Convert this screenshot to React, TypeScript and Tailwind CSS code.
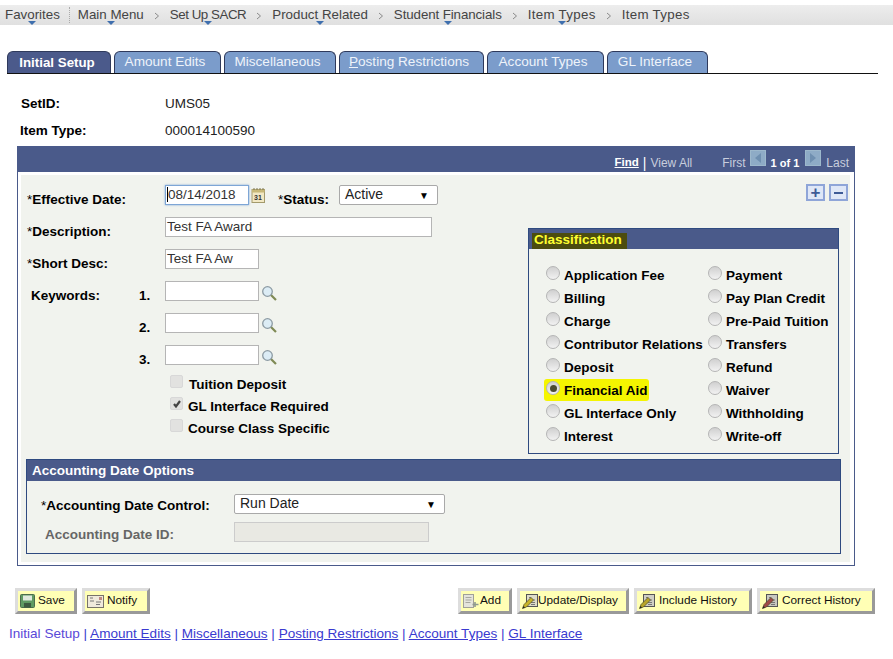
const crumbs = [
  { label: 'Favorites', caret: true, fit: '' },
  { label: 'Main Menu', caret: true, fit: '' },
  { label: 'Set Up SACR', caret: true, fit: 'tracking-[-0.45px]' },
  { label: 'Product Related', caret: true, fit: '' },
  { label: 'Student Financials', caret: true, fit: 'tracking-[-0.1px]' },
  { label: 'Item Types', caret: true, fit: 'tracking-[0.3px]' },
  { label: 'Item Types', caret: false, fit: 'tracking-[0.3px]' }
];

const tabs = [
  { label: 'Amount Edits', width: 'w-[107px]' },
  { label: 'Miscellaneous', width: 'w-[112px]' },
  { label: 'Posting Restrictions', width: 'w-[145px]' },
  { label: 'Account Types', width: 'w-[117px]' },
  { label: 'GL Interface', width: 'w-[101px]' }
];

const leftRadios = [
  'Application Fee',
  'Billing',
  'Charge',
  'Contributor Relations',
  'Deposit',
  'Financial Aid',
  'GL Interface Only',
  'Interest'
];

const rightRadios = [
  'Payment',
  'Pay Plan Credit',
  'Pre-Paid Tuition',
  'Transfers',
  'Refund',
  'Waiver',
  'Withholding',
  'Write-off'
];

const Caret = () => (
  <span className="absolute bottom-0 left-1/2 h-0 w-0 -translate-x-1/2 border-x-[4px] border-t-[4px] border-x-transparent border-t-[#3f6fae]" />
);

const Chevron = () => (
  <svg width="6" height="8" viewBox="0 0 6 8" className="mx-[10px] mt-[2px]">
    <path d="M1 1l3.5 3L1 7" fill="none" stroke="#8a8a8a" strokeWidth="1" />
  </svg>
);

const Lookup = () => (
  <svg width="16" height="16" viewBox="0 0 16 16" className="ml-[2px] mt-[4px] shrink-0">
    <path d="M9.500 9.500L15 15" stroke="#7f8a55" strokeWidth="2.200" />
    <circle cx="6.500" cy="6.500" r="4.800" fill="#dcecf5" stroke="#8c9aa3" strokeWidth="1.300" />
  </svg>
);

const Calendar = () => (
  <svg width="15" height="15" viewBox="0 0 15 15" className="ml-[2px] mt-[3px] shrink-0">
    <rect x="1" y="1.500" width="12.500" height="13" fill="#f2e8c4" stroke="#a39a6c" />
    <path d="M1 1.500h12.500v3H1z" fill="#c8b878" />
    <path d="M3 0v2M6 0v2M9 0v2M12 0v2" stroke="#7d7650" />
    <text x="3" y="12.300" fontSize="7" fontWeight="700" fill="#333" fontFamily="Liberation Sans">31</text>
  </svg>
);

const Radio = ({ on }: { on?: boolean }) => (
  <span className="mt-[-6px] flex h-[14px] w-[14px] shrink-0 items-center justify-center rounded-full border border-[#b5b5b5] bg-gradient-to-b from-[#d0d0d0] to-[#f2f2f2]">
    {on && <span className="h-[7px] w-[7px] rounded-full bg-[#4a4a30]" />}
  </span>
);

const Check = ({ on }: { on?: boolean }) => (
  <span className="flex h-[13px] w-[13px] shrink-0 items-center justify-center rounded-[2px] border border-[#d8d8d8] bg-[#e2e2e0]">
    {on && (
      <svg width="10" height="10" viewBox="0 0 10 10">
        <path d="M2 5l2 2.500L8 2" fill="none" stroke="#444" strokeWidth="2.200" />
      </svg>
    )}
  </span>
);

const Select = ({ label, width }: { label: string; width: string }) => (
  <div className={`flex h-[20px] items-center justify-between rounded-[2px] border border-[#a9a9a9] bg-white pb-[2px] pl-[5px] pr-[8px] text-[14px] text-[#222] ${width}`}>
    <span>{label}</span>
    <span className="mt-[2px] text-[10px] text-black">▼</span>
  </div>
);

const Field = ({ value, width }: { value?: string; width: string }) => (
  <div className={`h-[20px] overflow-hidden border border-[#b5b5b5] bg-white pl-[1px] text-[13.5px] leading-[18px] text-[#333] ${width}`}>
    {value}
  </div>
);

const PageButton = ({ label, icon, width, gap }: { label: string; icon: React.ReactNode; width: string; gap?: string }) => (
  <div className={`flex h-[26px] items-center border-[3px] border-b-[#999] border-l-[#ddd] border-r-[#999] border-t-[#ddd] bg-[#ffffb5] pl-[2px] text-[11.8px] text-[#111] ${width} ${gap ?? 'gap-[3px]'}`}>
    {icon}
    <span>{label}</span>
  </div>
);

const SaveIcon = () => (
  <svg width="15" height="14" viewBox="0 0 15 14">
    <rect x="0.500" y="0.500" width="14" height="13" rx="1" fill="#5f9a62" stroke="#4b6b4b" />
    <rect x="3" y="1.500" width="9" height="5" fill="#dfe8dd" />
    <rect x="4" y="9" width="7" height="4.500" fill="#3d5a40" />
  </svg>
);

const NotifyIcon = () => (
  <svg width="17" height="13" viewBox="0 0 17 13">
    <rect x="0.500" y="0.500" width="16" height="12" fill="#efeadb" stroke="#77736a" />
    <path d="M3 3h3M3 6h4M9 7h5M9 9.500h4" stroke="#777" />
    <rect x="12" y="2" width="3" height="3" fill="#c08a80" />
  </svg>
);

const AddIcon = () => (
  <svg width="16" height="14" viewBox="0 0 16 14">
    <rect x="0.500" y="0.500" width="10" height="13" fill="#e4e4dc" stroke="#a0a098" />
    <path d="M2.500 3.500h6M2.500 6h6M2.500 8.500h5" stroke="#a8a8a0" />
    <path d="M12 8v5M9.500 10.500h6" stroke="#8f9a8f" strokeWidth="1.600" />
  </svg>
);

const EditIcon = ({ tone, page }: { tone: string; page: string }) => (
  <svg width="16" height="15" viewBox="0 0 16 15">
    <rect x="4.500" y="0.500" width="11" height="12" fill={page} stroke="#555" />
    <path d="M7 3.500h2M7 6h6M9 8.500h4M9 10.500h4" stroke="#777" />
    <path d="M0.500 14.500l1.500-4 7-7 2.500 2.500-7 7z" fill={tone} stroke="#4a4a20" strokeWidth="0.700" />
    <path d="M0.500 14.500l1-2.600 1.600 1.600z" fill="#222" />
  </svg>
);

const Row = ({ label, children, className }: { label: React.ReactNode; children: React.ReactNode; className?: string }) => (
  <div className={`flex h-[20px] ${className ?? ''}`}>
    <div className="w-[138px] pt-[6px] leading-[18px]">{label}</div>
    {children}
  </div>
);

const Req = () => <span className="font-normal">*</span>;

export default function App() {
  return (
    <div className="h-[659px] w-[893px] overflow-hidden bg-white pt-[5px] font-['Liberation_Sans',Arial,sans-serif] text-[13.5px] text-black">
      <div className="flex h-[20px] items-center bg-gradient-to-b from-[#ededed] to-[#e0e0e0] pl-[5px] text-[13.33px] leading-[20px] text-[#444]">
        {crumbs.map((c, i) => (
          <div key={i} className="flex items-center">
            <span className={`relative h-[20px] whitespace-nowrap ${c.fit}`}>
              {c.label}
              {c.caret && <Caret />}
            </span>
            {i === 0 && <span className="ml-[9px] mr-[8px] h-[16px] border-l border-dotted border-[#aaa]" />}
            {i > 0 && i < crumbs.length - 1 && <Chevron />}
          </div>
        ))}
      </div>

      <div className="ml-[7px] mt-[26px] flex h-[23px] w-[871px] gap-[3px] border-b border-b-[#111]">
        <div className="flex h-[22px] w-[104px] items-center justify-center rounded-t-[6px] border border-b-0 border-[#2f3a5c] bg-[#4b5a8b] pr-[4px] text-[13.33px] font-bold text-white">
          Initial Setup
        </div>
        {tabs.map((t) => (
          <div
            key={t.label}
            className={`flex h-[22px] items-center justify-center rounded-t-[6px] border border-b-0 border-[#2f3a5c] bg-[#7b9ccb] pr-[5px] text-[13.6px] text-[#eef3fa] ${t.width}`}
          >
            {t.label === 'Posting Restrictions' ? (
              <span>
                <span className="underline">P</span>osting Restrictions
              </span>
            ) : (
              t.label
            )}
          </div>
        ))}
      </div>

      <div className="ml-[20px] mt-[21px] flex h-[18px] font-bold leading-[18px]">
        <span className="w-[145px] pl-[1px]">SetID:</span>
        <span className="font-normal text-[#222]">UMS05</span>
      </div>
      <div className="ml-[20px] mt-[9px] flex h-[18px] font-bold leading-[18px]">
        <span className="w-[145px]">Item Type:</span>
        <span className="font-normal text-[#222]">000014100590</span>
      </div>

      <div className="ml-[17px] mt-[6px] h-[420px] w-[838px] border border-t-0 border-[#4a5a8a]">
        <div className="flex h-[26px] items-center justify-end bg-[#4a5a8a] pr-[5px] pt-[8px] text-[12px] text-[#c8cedd]">
          <span className="text-[11.5px] font-bold text-white underline">Find</span>
          <span className="mx-[4px] text-[14px] text-white">|</span>
          <span>View All</span>
          <span className="ml-[30px]">First</span>
          <span className="mb-[10px] ml-[4px] mr-[5px] flex h-[16px] w-[16px] items-center justify-center border border-[#9db8cc] bg-[#8eabc6]">
            <span className="h-0 w-0 border-y-[5px] border-r-[6px] border-y-transparent border-r-[#6f8fb0]" />
          </span>
          <span className="text-[11px] font-bold text-white">1 of 1</span>
          <span className="mb-[10px] ml-[6px] mr-[5px] flex h-[16px] w-[16px] items-center justify-center border border-[#9db8cc] bg-[#8eabc6]">
            <span className="h-0 w-0 border-y-[5px] border-l-[6px] border-y-transparent border-l-[#6f8fb0]" />
          </span>
          <span>Last</span>
        </div>

        <div className="ml-[3px] mr-[4px] mt-[3px] h-[387px] bg-[#f1f3ee] pl-[6px] pr-[11px] pt-[10px]">
          <div className="flex justify-between">
            <div className="flex w-[490px] flex-col font-bold">
              <div className="flex h-[20px]">
                <div className="w-[138px] pt-[6px] leading-[18px]">
                  <Req />Effective Date:
                </div>
                <div className="h-[20px] w-[84px] border border-[#7ea6d6] bg-white pl-[1px] text-[13.5px] font-normal leading-[18px] text-[#333] shadow-[0_0_2px_#7ea6d6]">
                  <span className="border-l border-black">08/14/2018</span>
                </div>
                <Calendar />
                <div className="ml-[12px] w-[61px] pt-[6px] leading-[18px]">
                  <Req />Status:
                </div>
                <Select label="Active" width="w-[99px] font-normal" />
              </div>
              <Row className="mt-[12px]" label={<><Req />Description:</>}>
                <Field value="Test FA Award" width="w-[267px] font-normal" />
              </Row>
              <Row className="mt-[12px]" label={<><Req />Short Desc:</>}>
                <Field value="Test FA Aw" width="w-[94px] font-normal" />
              </Row>
              {['1.', '2.', '3.'].map((n, i) => (
                <div key={n} className="mt-[12px] flex h-[20px]">
                  <div className="w-[112px] pl-[4px] pt-[6px] leading-[18px]">{i === 0 && 'Keywords:'}</div>
                  <div className="w-[26px] pt-[6px] leading-[18px]">{n}</div>
                  <Field width="w-[94px]" />
                  <Lookup />
                </div>
              ))}
              <div className="ml-[143px] mt-[10px] flex flex-col gap-[7px] leading-[13px]">
                <div className="flex h-[15px] gap-[6px]">
                  <Check />
                  <span className="mt-[3px]">Tuition Deposit</span>
                </div>
                <div className="flex h-[15px] gap-[5px]">
                  <Check on />
                  <span className="mt-[3px]">GL Interface Required</span>
                </div>
                <div className="flex h-[15px] gap-[5px]">
                  <Check />
                  <span className="mt-[3px]">Course Class Specific</span>
                </div>
              </div>
            </div>

            <div className="mt-[-1px] flex w-[311px] flex-col items-end">
              <div className="mr-[-9px] flex gap-[4px]">
                <span className="flex h-[17px] w-[19px] items-center justify-center border-2 border-[#8fa5d8] bg-[#dfe7f7] text-[17px] font-bold leading-none text-[#3d5a96]">+</span>
                <span className="flex h-[17px] w-[19px] items-center justify-center border-2 border-[#8fa5d8] bg-[#dfe7f7]">
                  <span className="h-[2px] w-[9px] bg-[#3d5a96]" />
                </span>
              </div>
              <div className="mt-[27px] h-[226px] w-[311px] border border-[#2f4a80] font-bold">
                <div className="h-[20px] bg-[#4a5a8a] pl-[3px] pt-[4px]">
                  <span className="block h-[16px] w-[95px] bg-[#4c4c0f] pl-[2px] leading-[14px] text-[#ffff30]">Classification</span>
                </div>
                <div className="flex pl-[17px] pt-[18px]">
                  <div className="flex w-[162px] flex-col gap-[5px]">
                    {leftRadios.map((l) => (
                      <div key={l} className="relative flex h-[18px] items-center gap-[4px] leading-[18px]">
                        {l === 'Financial Aid' && <span className="absolute -left-[2px] -top-[3px] h-[22px] w-[105px] rounded-[3px] bg-[#f5f500]" />}
                        <span className="relative flex items-center gap-[4px] whitespace-nowrap">
                          <Radio on={l === 'Financial Aid'} />
                          <span>{l}</span>
                        </span>
                      </div>
                    ))}
                  </div>
                  <div className="flex flex-col gap-[5px]">
                    {rightRadios.map((l) => (
                      <div key={l} className="flex h-[18px] items-center gap-[4px] whitespace-nowrap leading-[18px]">
                        <Radio />
                        <span>{l}</span>
                      </div>
                    ))}
                  </div>
                </div>
              </div>
            </div>
          </div>

          <div className="ml-[-1px] mt-[5px] h-[95px] w-[815px] border border-[#2f4a80]">
            <div className="flex h-[21px] items-center bg-[#4a5a8a] pl-[5px] pt-[2px] font-bold text-white">Accounting Date Options</div>
            <div className="ml-[14px] mt-[13px] flex h-[20px] font-bold">
              <div className="w-[193px] pt-[3px] leading-[18px]">
                <Req />Accounting Date Control:
              </div>
              <Select label="Run Date" width="w-[211px] font-normal" />
            </div>
            <div className="ml-[18px] mt-[8px] flex h-[20px] font-bold text-[#666]">
              <div className="w-[189px] pt-[4px] leading-[18px]">Accounting Date ID:</div>
              <div className="h-[20px] w-[195px] border border-[#ccc] bg-[#e9e9e3]" />
            </div>
          </div>
        </div>
      </div>

      <div className="ml-[15px] mt-[22px] flex w-[860px]">
        <PageButton label="Save" width="w-[62px]" icon={<SaveIcon />} />
        <div className="ml-[5px]">
          <PageButton label="Notify" width="w-[68px]" icon={<NotifyIcon />} />
        </div>
        <div className="ml-auto flex gap-[5px]">
          <PageButton label="Add" width="w-[54px]" gap="gap-[1px]" icon={<AddIcon />} />
          <PageButton label="Update/Display" width="w-[112px]" gap="gap-0" icon={<EditIcon tone="#c8b428" page="#dedcc8" />} />
          <PageButton label="Include History" width="w-[118px]" gap="gap-[4px]" icon={<EditIcon tone="#b8a428" page="#cfcfc4" />} />
          <PageButton label="Correct History" width="w-[118px]" gap="gap-[4px]" icon={<EditIcon tone="#a04848" page="#c8c8c0" />} />
        </div>
      </div>

      <div className="ml-[9px] mt-[11px] text-[13.55px] leading-[18px] text-[#3a3ad0]">
        <span className="text-[#5a48d8]">Initial Setup</span>
        {' | '}
        <span className="underline">Amount Edits</span>
        {' | '}
        <span className="underline">Miscellaneous</span>
        {' | '}
        <span className="underline">Posting Restrictions</span>
        {' | '}
        <span className="underline">Account Types</span>
        {' | '}
        <span className="underline">GL Interface</span>
      </div>
    </div>
  );
}
